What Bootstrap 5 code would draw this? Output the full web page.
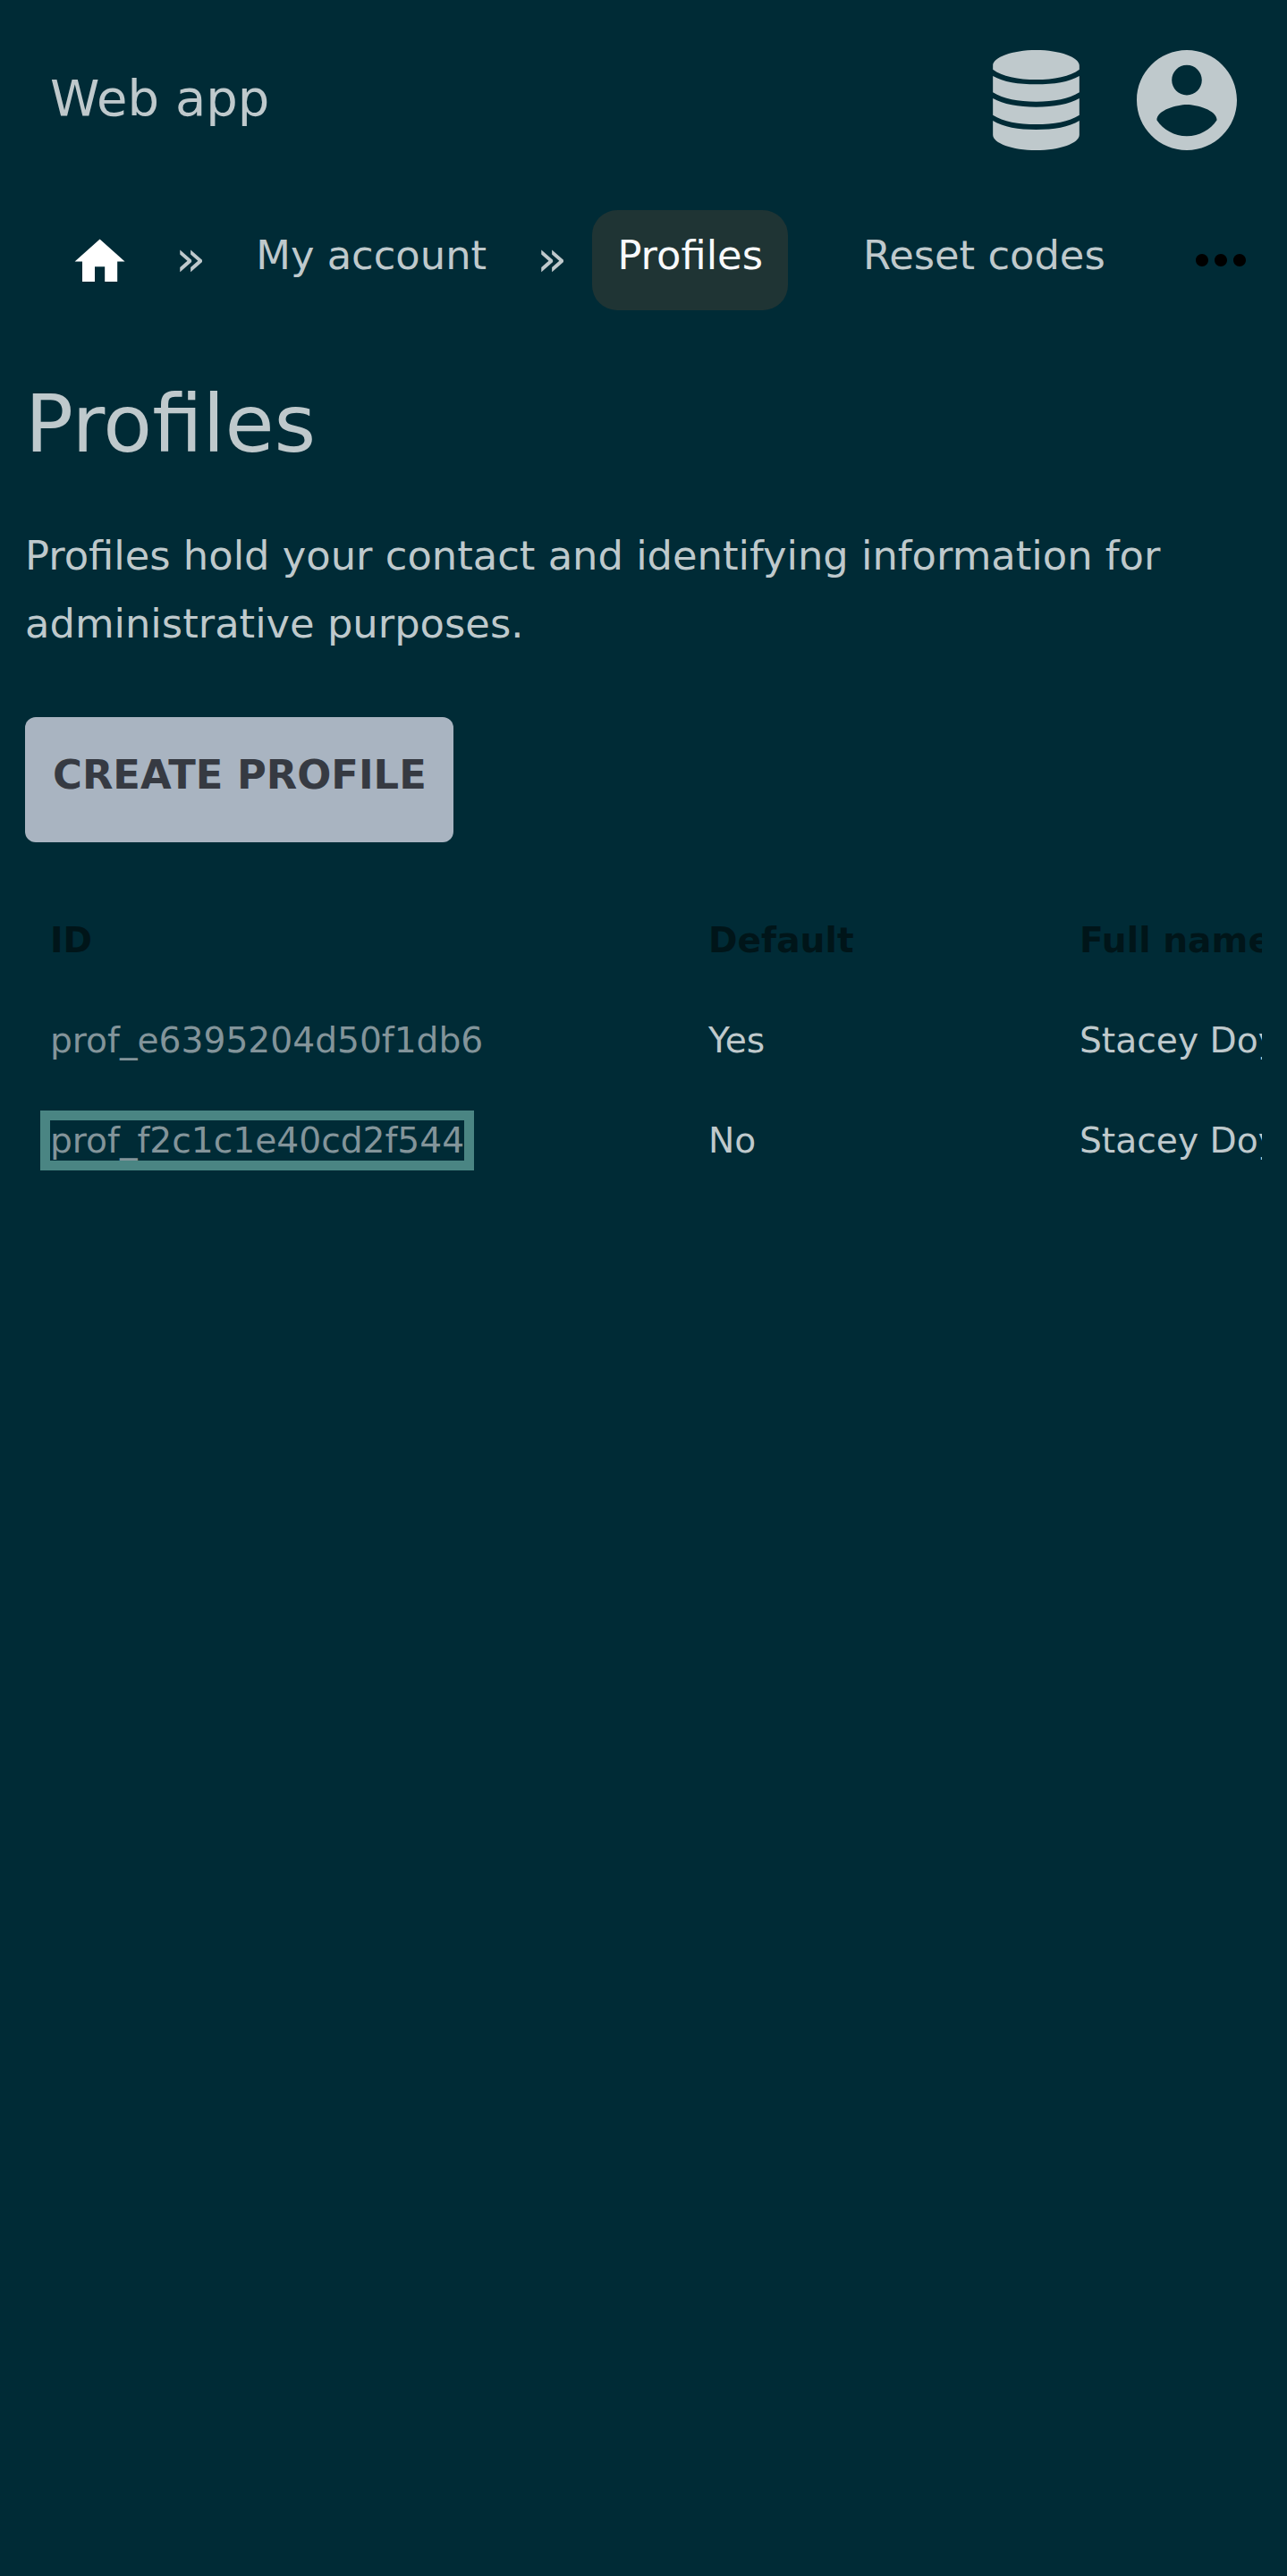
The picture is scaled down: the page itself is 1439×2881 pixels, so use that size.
<!DOCTYPE html>
<html lang="en">
<head>
<meta charset="utf-8">
<meta name="viewport" content="width=device-width, initial-scale=1">
<title>Profiles</title>
<link href="https://cdn.jsdelivr.net/npm/bootstrap@5.3.0/dist/css/bootstrap.min.css" rel="stylesheet">
<style>
body{background:#002b36;color:#bfc9cc;font-family:"DejaVu Sans",sans-serif;font-size:44.8px;line-height:76.4px;min-height:2881px;overflow-x:hidden}
svg{display:block;fill:currentColor;flex:none}
a{color:inherit;text-decoration:none}
.topbar{height:224px;padding:0 56px}
.app-title{font-size:56px;line-height:84px;padding:0 0 4px}
.tools{gap:64px}
.crumbs{height:112px;margin-top:10.6px;padding-left:56px;white-space:nowrap}
.crumb{height:112px;line-height:76px;margin-left:28px;padding:13.4px 28px 0;border-radius:28px}
.crumb.current{background:#1f3434;color:#f8f9fb}
.crumb.sibling{margin-left:56px}
.sep{font-size:56px;line-height:108px;margin-left:28px;padding-bottom:4px}
.home-link{padding:4px 22.4px 0;color:#fff}
.more{margin-left:59px}
.page{padding:0 28px}
.page-title{font-size:89.6px;line-height:116px;font-weight:400;margin:69px 0 0}
.intro{margin:52.4px 0 0}
.btn-create{display:block;width:479px;height:140px;margin-top:65px;padding:0 31px 10px;border:0;border-radius:12px;background:#a9b4c1;color:#363a42;font-size:44.8px;font-weight:700;line-height:130px;white-space:nowrap;text-align:left}
.grid-wrap{margin-top:54.2px;overflow:hidden}
.grid-table{--bs-table-bg:transparent;--bs-table-color:#bfc9cc;color:#bfc9cc;table-layout:fixed;width:1900px;font-size:39.2px;line-height:45px;margin:0}
.grid-table th,.grid-table td{height:112px;padding:0 28px;border:0;vertical-align:middle;white-space:nowrap}
.grid-table th{color:#001519;font-weight:700}
.id-link{color:#83949a;display:inline-block}
.id-link.focused{outline:11px solid #4a8583}
</style>
</head>
<body>
<header class="topbar d-flex align-items-center justify-content-between">
<a class="app-title" href="#">Web app</a>
<div class="tools d-flex align-items-center">
<svg width="97" height="112" viewBox="0 0 290 336"><path d="M0 52C0 24 65 0 145 0S290 24 290 52V65C260 88 205 99 145 99S30 88 0 65ZM0 87C35 107 85 115 145 115S255 107 290 87V142C255 164 205 173 145 173S35 164 0 142ZM0 162C35 182 85 191 145 191S255 182 290 162V218C255 240 205 249 145 249S35 240 0 218ZM0 237C35 258 85 267 145 267S255 258 290 237V284C290 312 225 336 145 336S0 312 0 284Z"/></svg>
<svg width="112" height="112" viewBox="2 2 20 20"><path d="M12 2C6.48 2 2 6.48 2 12s4.48 10 10 10 10-4.48 10-10S17.52 2 12 2zm0 3c1.66 0 3 1.34 3 3s-1.34 3-3 3-3-1.34-3-3 1.34-3 3-3zm0 14.2c-2.5 0-4.71-1.28-6-3.22.03-1.99 4-3.08 6-3.08 1.99 0 5.97 1.09 6 3.08-1.29 1.94-3.5 3.22-6 3.22z"/></svg>
</div>
</header>
<nav class="crumbs d-flex align-items-center">
<a class="home-link" href="#" aria-label="Home"><svg width="67.2" height="67.2" viewBox="0 0 24 24"><path d="M10 20v-6h4v6h5v-8h3L12 3 2 12h3v8z"/></svg></a>
<span class="sep">»</span>
<a class="crumb" href="#">My account</a>
<span class="sep">»</span>
<a class="crumb current" href="#">Profiles</a>
<a class="crumb sibling" href="#">Reset codes</a>
<svg class="more text-black" width="84" height="84" viewBox="0 0 24 24"><path d="M6 10c-1.1 0-2 .9-2 2s.9 2 2 2 2-.9 2-2-.9-2-2-2zm12 0c-1.1 0-2 .9-2 2s.9 2 2 2 2-.9 2-2-.9-2-2-2zm-6 0c-1.1 0-2 .9-2 2s.9 2 2 2 2-.9 2-2-.9-2-2-2z"/></svg>
</nav>
<main class="page">
<h1 class="page-title">Profiles</h1>
<p class="intro">Profiles hold your contact and identifying information for administrative purposes.</p>
<button class="btn btn-create" type="button">CREATE PROFILE</button>
<div class="grid-wrap">
<table class="table grid-table">
<colgroup><col style="width:736px"><col style="width:415px"><col></colgroup>
<thead><tr><th>ID</th><th>Default</th><th>Full name</th></tr></thead>
<tbody>
<tr><td><a class="id-link" href="#">prof_e6395204d50f1db6</a></td><td>Yes</td><td>Stacey Doyle</td></tr>
<tr><td><a class="id-link focused" href="#">prof_f2c1c1e40cd2f544</a></td><td>No</td><td>Stacey Doyle</td></tr>
</tbody>
</table>
</div>
</main>
<script src="https://cdn.jsdelivr.net/npm/bootstrap@5.3.0/dist/js/bootstrap.bundle.min.js"></script>
</body>
</html>
